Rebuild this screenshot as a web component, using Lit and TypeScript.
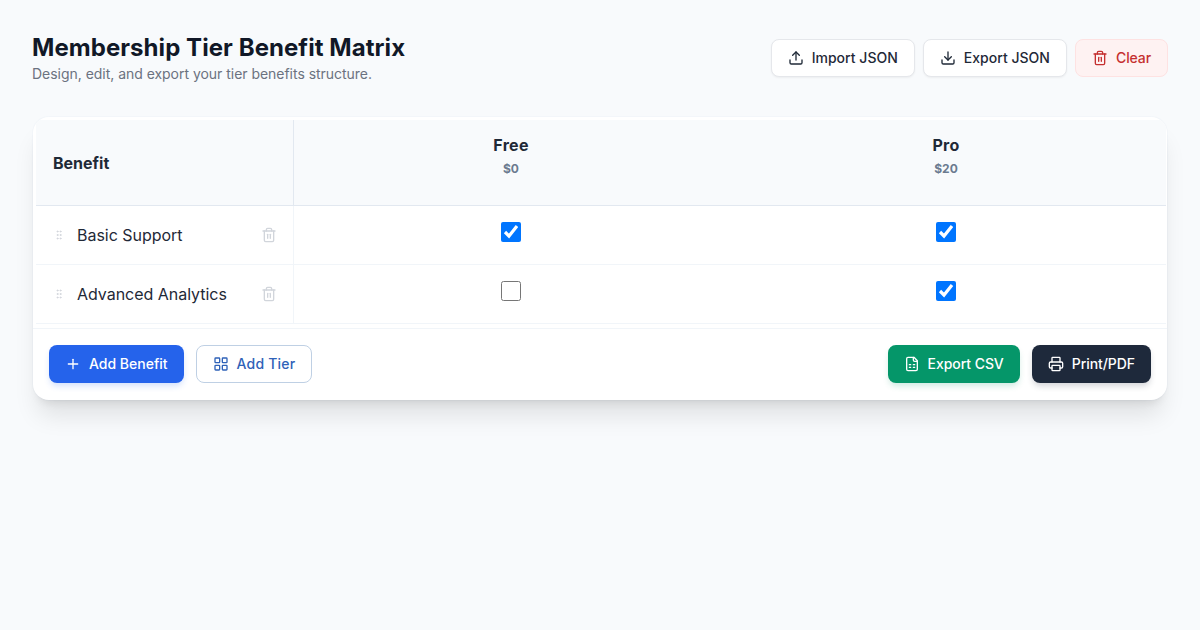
import { LitElement, html, css, svg } from 'lit';
import { customElement } from 'lit/decorators.js';

const icon = (body: unknown, size = 16) => html`<svg class="icon" width=${size} height=${size} viewBox="0 0 24 24" fill="none" stroke="currentColor" stroke-width="2" stroke-linecap="round" stroke-linejoin="round">${body}</svg>`;

const upload = svg`<path d="M21 15v4a2 2 0 0 1-2 2H5a2 2 0 0 1-2-2v-4"/><polyline points="17 8 12 3 7 8"/><line x1="12" y1="3" x2="12" y2="15"/>`;
const download = svg`<path d="M21 15v4a2 2 0 0 1-2 2H5a2 2 0 0 1-2-2v-4"/><polyline points="7 10 12 15 17 10"/><line x1="12" y1="15" x2="12" y2="3"/>`;
const trash = svg`<path d="M3 6h18"/><path d="M19 6v14a2 2 0 0 1-2 2H7a2 2 0 0 1-2-2V6"/><path d="M8 6V4a2 2 0 0 1 2-2h4a2 2 0 0 1 2 2v2"/><line x1="10" y1="11" x2="10" y2="17"/><line x1="14" y1="11" x2="14" y2="17"/>`;
const plus = svg`<path d="M5 12h14"/><path d="M12 5v14"/>`;
const grid = svg`<rect x="3" y="3" width="7" height="7" rx="1"/><rect x="14" y="3" width="7" height="7" rx="1"/><rect x="14" y="14" width="7" height="7" rx="1"/><rect x="3" y="14" width="7" height="7" rx="1"/>`;
const sheet = svg`<path d="M15 2H6a2 2 0 0 0-2 2v16a2 2 0 0 0 2 2h12a2 2 0 0 0 2-2V7z"/><path d="M14 2v4a2 2 0 0 0 2 2h4"/><path d="M8 13h2"/><path d="M14 13h2"/><path d="M8 17h2"/><path d="M14 17h2"/>`;
const printer = svg`<path d="M6 18H4a2 2 0 0 1-2-2v-5a2 2 0 0 1 2-2h16a2 2 0 0 1 2 2v5a2 2 0 0 1-2 2h-2"/><path d="M6 9V3a1 1 0 0 1 1-1h10a1 1 0 0 1 1 1v6"/><rect x="6" y="14" width="12" height="8" rx="1"/>`;
const grip = svg`<circle cx="9" cy="12" r="1"/><circle cx="9" cy="5" r="1"/><circle cx="9" cy="19" r="1"/><circle cx="15" cy="12" r="1"/><circle cx="15" cy="5" r="1"/><circle cx="15" cy="19" r="1"/>`;

const tiers = [
  { name: 'Free', price: '$0' },
  { name: 'Pro', price: '$20' },
];

const benefits = [
  { name: 'Basic Support', values: [true, true] },
  { name: 'Advanced Analytics', values: [false, true] },
];

@customElement('app-root')
export class AppRoot extends LitElement {
  static styles = css`
    :host {
      display: block;
      box-sizing: border-box;
      min-height: 630px;
      padding: 32px 32px 0;
      background: #f8fafc;
      font-family: Inter, "Liberation Sans", sans-serif;
      color: #1f2937;
    }

    .icon {
      display: block;
      flex: none;
    }

    .top {
      display: flex;
      justify-content: space-between;
      align-items: center;
      margin-bottom: 33px;
    }

    h1 {
      margin: 0;
      font-size: 24px;
      line-height: 32px;
      font-weight: 700;
      letter-spacing: 0.06px;
      color: #111827;
    }

    .sub {
      margin: 0;
      font-size: 14px;
      line-height: 20px;
      letter-spacing: -0.03px;
      color: #6b7280;
    }

    .actions {
      display: flex;
      gap: 8px;
    }

    .btn {
      display: inline-flex;
      align-items: center;
      gap: 8px;
      box-sizing: border-box;
      height: 38px;
      padding: 0 16px;
      border: 0;
      border-radius: 8px;
      font: 500 14px/20px Inter, "Liberation Sans", sans-serif;
    }

    .light {
      background: #fff;
      border: 1px solid #e5e7eb;
      color: #1f2937;
      letter-spacing: 0.02px;
      box-shadow: 0 1px 2px rgba(0, 0, 0, 0.05);
    }

    .danger {
      background: #fef2f2;
      border: 1px solid #fee2e2;
      color: #c53030;
      letter-spacing: -0.1px;
    }

    .primary {
      background: #2563eb;
      color: #fff;
      box-shadow: 0 4px 6px -1px rgba(37, 99, 235, 0.2);
    }

    .outline {
      background: #fff;
      border: 1px solid #bfd0e4;
      color: #2f62b8;
      letter-spacing: 0.2px;
    }

    .green {
      background: #059669;
      color: #fff;
      letter-spacing: -0.06px;
      box-shadow: 0 4px 6px -1px rgba(5, 150, 105, 0.2);
    }

    .dark {
      background: #1e293b;
      color: #fff;
      letter-spacing: -0.06px;
      box-shadow: 0 4px 6px -1px rgba(30, 41, 59, 0.2);
    }

    .card {
      margin: 0 1px;
      background: #fff;
      border-radius: 16px;
      box-shadow: 0 20px 25px -5px rgba(0, 0, 0, 0.1), 0 8px 10px -6px rgba(0, 0, 0, 0.1), 0 0 0 1px rgba(241, 245, 249, 0.8);
      overflow: hidden;
    }

    .matrix {
      display: grid;
      grid-template-columns: 258px 434px 1fr;
      margin: 0 1px 0 3px;
      padding-top: 3px;
    }

    .matrix > :nth-child(3n) {
      padding-right: 2px;
    }

    .head {
      display: flex;
      flex-direction: column;
      align-items: center;
      box-sizing: border-box;
      height: 86px;
      padding-top: 13px;
      background: #f8fafc;
      border-bottom: 1px solid #e2e8f0;
    }

    .head.first {
      align-items: flex-start;
      justify-content: center;
      padding: 0 0 0 17px;
      border-right: 1px solid #e2e8f0;
      font-size: 16px;
      line-height: 24px;
      font-weight: 700;
      color: #1f2937;
    }

    .tier-name {
      font-size: 16px;
      line-height: 24px;
      font-weight: 700;
      letter-spacing: 0.3px;
      color: #1f2937;
    }

    .tier-price {
      margin-top: 4px;
      font-size: 12px;
      line-height: 16px;
      font-weight: 700;
      color: #6b7a90;
    }

    .label {
      display: flex;
      align-items: center;
      box-sizing: border-box;
      height: 59px;
      padding: 0 16px 0 17px;
      border-right: 1px solid #f1f5f9;
      border-bottom: 1px solid #f1f5f9;
      font-size: 16px;
      letter-spacing: -0.03px;
      color: #1f2937;
    }

    .grip {
      color: #d1d5db;
      margin-right: 12px;
    }

    .label span {
      flex: 1;
    }

    .del {
      color: #d1d5db;
    }

    .check {
      display: flex;
      justify-content: center;
      box-sizing: border-box;
      height: 59px;
      padding-top: 16px;
      border-bottom: 1px solid #f1f5f9;
    }

    .check input {
      width: 20px;
      height: 20px;
      margin: 0;
    }

    .foot {
      display: flex;
      justify-content: space-between;
      margin-top: 4px;
      padding: 16px 16px 17px;
      border-top: 1px solid #f1f5f9;
    }

    .group {
      display: flex;
      gap: 12px;
    }
  `;

  render() {
    return html`
      <header class="top">
        <div>
          <h1>Membership Tier Benefit Matrix</h1>
          <p class="sub">Design, edit, and export your tier benefits structure.</p>
        </div>
        <div class="actions">
          <button class="btn light">${icon(upload)}Import JSON</button>
          <button class="btn light">${icon(download)}Export JSON</button>
          <button class="btn danger">${icon(trash)}Clear</button>
        </div>
      </header>
      <section class="card">
        <div class="matrix">
          <div class="head first">Benefit</div>
          ${tiers.map(
            (t) => html`<div class="head">
              <div class="tier-name">${t.name}</div>
              <div class="tier-price">${t.price}</div>
            </div>`
          )}
          ${benefits.map(
            (b) => html`
              <div class="label">
                <div class="grip">${icon(grip, 12)}</div>
                <span>${b.name}</span>
                <div class="del">${icon(trash, 16)}</div>
              </div>
              ${b.values.map(
                (v) => html`<div class="check"><input type="checkbox" .checked=${v} /></div>`
              )}
            `
          )}
        </div>
        <div class="foot">
          <div class="group">
            <button class="btn primary">${icon(plus)}Add Benefit</button>
            <button class="btn outline">${icon(grid)}Add Tier</button>
          </div>
          <div class="group">
            <button class="btn green">${icon(sheet)}Export CSV</button>
            <button class="btn dark">${icon(printer)}Print/PDF</button>
          </div>
        </div>
      </section>
    `;
  }
}
